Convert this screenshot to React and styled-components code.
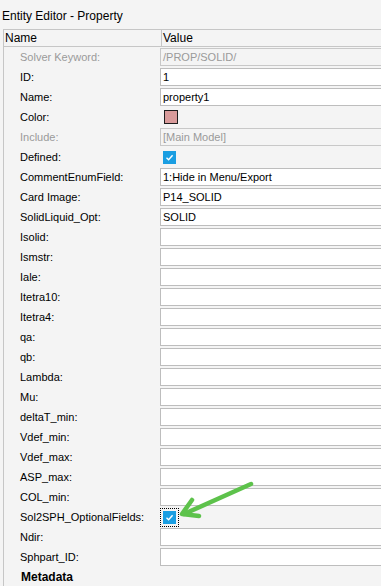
import React from "react";
import styled, { createGlobalStyle } from "styled-components";

const GlobalStyle = createGlobalStyle`
  html, body {
    margin: 0;
    padding: 0;
    background: #f4f4f4;
    overflow: hidden;
  }
  body {
    font-family: "Liberation Sans", Arial, sans-serif;
    color: #000;
  }
`;

const Page = styled.div`
  position: relative;
  width: 381px;
  height: 586px;
  overflow: hidden;
`;

const Title = styled.div`
  height: 29px;
  box-sizing: border-box;
  padding: 4px 0 0 2px;
  line-height: 25px;
  font-size: 12px;
  white-space: nowrap;
`;

const Table = styled.div`
  margin-left: 3px;
  width: 420px;
  border-left: 1px solid #c6c6c6;
  font-size: 11px;
`;

const HeaderRow = styled.div`
  display: grid;
  grid-template-columns: 157px 1fr;
  height: 18px;
  box-sizing: border-box;
  border-top: 1px solid #c6c6c6;
  border-bottom: 1px solid #c6c6c6;
`;

const HeaderCell = styled.div`
  padding-left: 1px;
  line-height: 16px;
  font-size: 12px;
  border-left: ${(p) => (p.$divider ? "1px solid #c6c6c6" : "none")};
`;

const Row = styled.div`
  display: grid;
  grid-template-columns: 156px 1fr;
  height: 20px;
  align-items: center;
`;

const Label = styled.div`
  padding-left: ${(p) => (p.$bold ? "17px" : "16px")};
  white-space: nowrap;
  color: ${(p) => (p.$disabled ? "#9a9a9a" : "#000")};
  font-weight: ${(p) => (p.$bold ? 700 : 400)};
  font-size: ${(p) => (p.$bold ? "12px" : "11px")};
  line-height: 20px;
`;

const Field = styled.div`
  height: 18px;
  box-sizing: border-box;
  border: 1px solid ${(p) => (p.$disabled ? "#c8c8c8" : "#bdbdbd")};
  background: ${(p) => (p.$disabled ? "#f4f4f4" : "#fff")};
  color: ${(p) => (p.$disabled ? "#9a9a9a" : "#000")};
  padding-left: 2px;
  line-height: 16px;
  font-size: 11px;
  white-space: nowrap;
  overflow: hidden;
`;

const ValueCell = styled.div`
  display: flex;
  align-items: center;
  height: 20px;
`;

const Swatch = styled.div`
  width: 14px;
  height: 14px;
  box-sizing: border-box;
  margin-left: 4px;
  border: 1px solid #1e1e1e;
  background: #d99b9b;
`;

const Focus = styled.div`
  display: flex;
  align-items: center;
  justify-content: center;
  width: 19px;
  height: 19px;
  box-sizing: border-box;
  outline: ${(p) => (p.$focused ? "1px dotted #000" : "none")};
  outline-offset: -1px;
`;

const Check = styled.div`
  width: 13px;
  height: 13px;
  background: #1a9ee2;
  display: flex;
  align-items: center;
  justify-content: center;
`;

const Overlay = styled.svg`
  position: absolute;
  left: 0;
  top: 0;
  pointer-events: none;
`;

function CheckBox({ focused }) {
  return (
    <Focus $focused={focused}>
      <Check>
        <svg width="9" height="9" viewBox="0 0 9 9">
          <path d="M1.5 4.8 L3.6 6.8 L7.6 2.2" fill="none" stroke="#fff" strokeWidth="1.4" />
        </svg>
      </Check>
    </Focus>
  );
}

const rows = [
  { label: "Solver Keyword:", value: "/PROP/SOLID/", disabled: true },
  { label: "ID:", value: "1" },
  { label: "Name:", value: "property1" },
  { label: "Color:", kind: "color" },
  { label: "Include:", value: "[Main Model]", disabled: true },
  { label: "Defined:", kind: "check" },
  { label: "CommentEnumField:", value: "1:Hide in Menu/Export" },
  { label: "Card Image:", value: "P14_SOLID" },
  { label: "SolidLiquid_Opt:", value: "SOLID" },
  { label: "Isolid:", value: "" },
  { label: "Ismstr:", value: "" },
  { label: "Iale:", value: "" },
  { label: "Itetra10:", value: "" },
  { label: "Itetra4:", value: "" },
  { label: "qa:", value: "" },
  { label: "qb:", value: "" },
  { label: "Lambda:", value: "" },
  { label: "Mu:", value: "" },
  { label: "deltaT_min:", value: "" },
  { label: "Vdef_min:", value: "" },
  { label: "Vdef_max:", value: "" },
  { label: "ASP_max:", value: "" },
  { label: "COL_min:", value: "" },
  { label: "Sol2SPH_OptionalFields:", kind: "check", focused: true },
  { label: "Ndir:", value: "" },
  { label: "Sphpart_ID:", value: "" },
];

function renderValue(r) {
  if (r.kind === "color") {
    return (
      <ValueCell>
        <Swatch />
      </ValueCell>
    );
  }
  if (r.kind === "check") {
    return (
      <ValueCell>
        <CheckBox focused={r.focused} />
      </ValueCell>
    );
  }
  return <Field $disabled={r.disabled}>{r.value}</Field>;
}

export default function App() {
  return (
    <Page>
      <GlobalStyle />
      <Title>Entity Editor - Property</Title>
      <Table>
        <HeaderRow>
          <HeaderCell>Name</HeaderCell>
          <HeaderCell $divider>Value</HeaderCell>
        </HeaderRow>
        {rows.map((r) => (
          <Row key={r.label}>
            <Label $disabled={r.disabled}>{r.label}</Label>
            {renderValue(r)}
          </Row>
        ))}
        <Row>
          <Label $bold>Metadata</Label>
        </Row>
      </Table>
      <Overlay width="381" height="586">
        <g stroke="#5dc24b" strokeWidth="4.5" strokeLinecap="round" strokeLinejoin="round" fill="none">
          <path d="M251 484 L184 514" />
          <path d="M192 500 L182 514 L199 516" />
        </g>
      </Overlay>
    </Page>
  );
}
